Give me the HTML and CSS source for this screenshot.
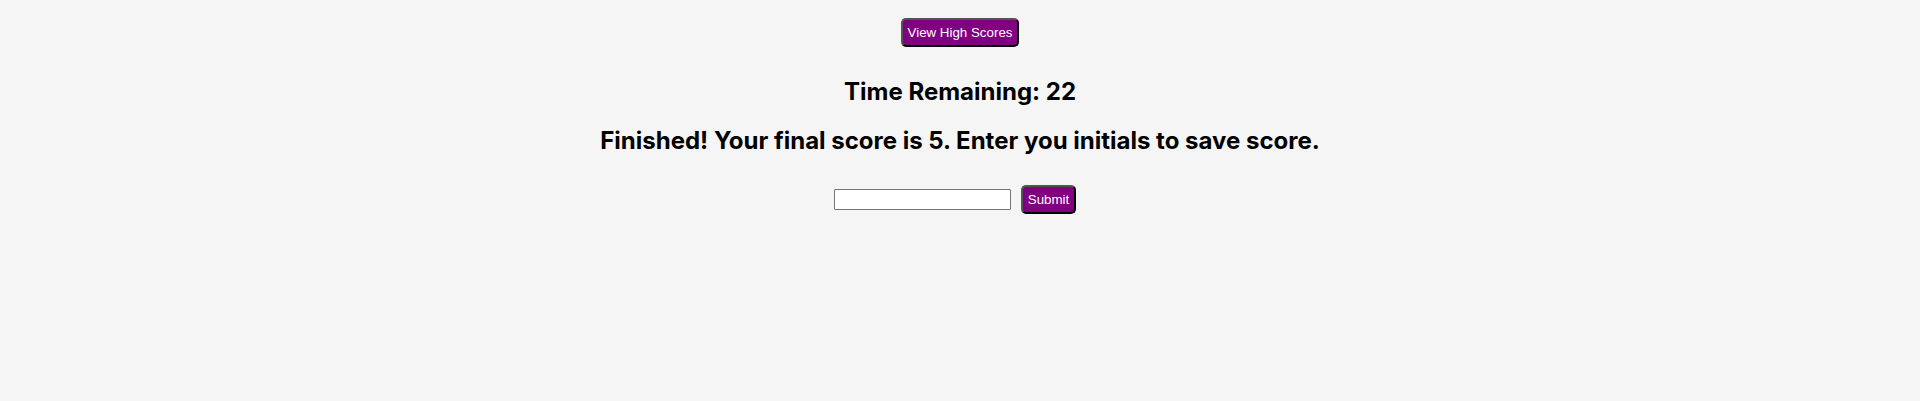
FILE: index.html
```
<!DOCTYPE html>
<html lang="en">
<head>
<meta charset="utf-8">
<title>Quiz</title>
<link rel="stylesheet" href="styles.css">
</head>
<body>
<header><button class="btn" type="button">View High Scores</button></header>
<main>
<h2 class="timer">Time Remaining: 22</h2>
<h2 class="result">Finished! Your final score is 5. Enter you initials to save score.</h2>
<form class="initials"><input class="field" type="text" aria-label="Initials"><button class="btn" type="button">Submit</button></form>
</main>
</body>
</html>
```
FILE: styles.css
```
body {
  margin: 8px;
  background: #f5f5f5;
  color: #000;
  font-family: Inter, sans-serif;
  text-align: center;
}
.btn {
  margin: 10px;
  padding: 5px;
  border: 2px outset #000;
  border-radius: 5px;
  background: purple;
  color: #fff;
  font-family: "Liberation Sans", Arial, sans-serif;
  line-height: 15px;
}
.timer, .result {
  margin: 20px 0;
  font-size: 24px;
  line-height: 29px;
  font-weight: 700;
}
.initials {
  display: flex;
  justify-content: center;
  align-items: center;
}
.field {
  box-sizing: border-box;
  width: 177px;
  height: 21px;
  padding: 1px 2px;
  border: 1px solid #767676;
  border-radius: 1px;
  background: #fff;
}
```
